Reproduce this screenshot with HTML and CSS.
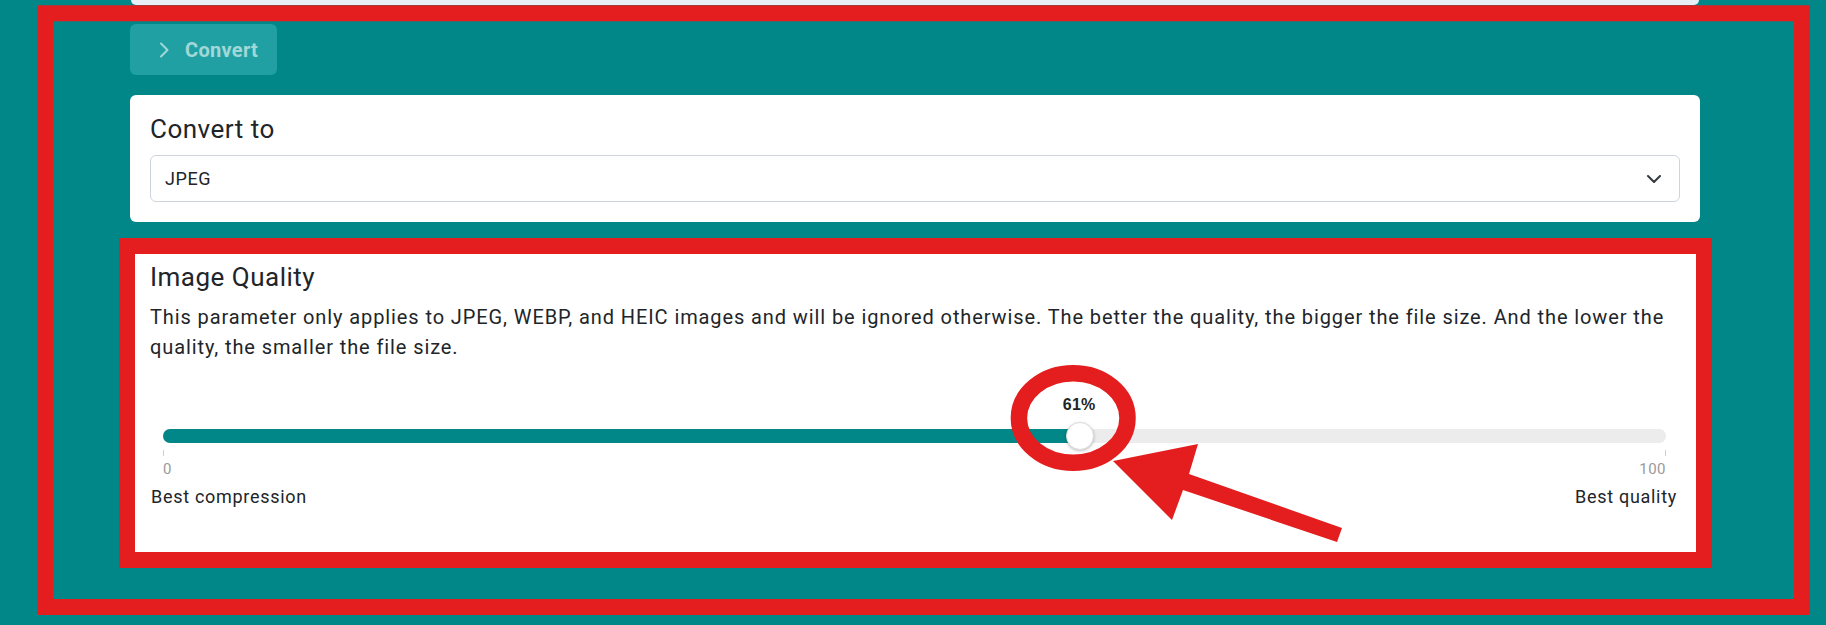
FILE: index.html
```html
<!DOCTYPE html>
<html lang="en">
<head>
<meta charset="utf-8">
<title>Convert</title>
<link rel="stylesheet" href="styles.css">
</head>
<body>
<div class="page">
  <div class="wrap">
    <div class="top-card"></div>
    <button class="convert-btn" type="button">
      <svg class="btn-chevron" width="11" height="16" viewBox="0 0 11 16"><path d="M2 1.5 L8.5 8 L2 14.5" fill="none" stroke="currentColor" stroke-width="2" stroke-linecap="round" stroke-linejoin="round"/></svg>
      <span>Convert</span>
    </button>

    <section class="card card-format">
      <h2 class="card-title">Convert to</h2>
      <div class="select">
        <span class="select-value">JPEG</span>
        <svg class="select-chevron" width="14" height="8" viewBox="0 0 14 8"><path d="M1 1 L7 7 L13 1" fill="none" stroke="#343a40" stroke-width="2" stroke-linecap="round" stroke-linejoin="round"/></svg>
      </div>
    </section>

    <section class="card card-quality">
      <h2 class="card-title">Image Quality</h2>
      <p class="card-text">This parameter only applies to JPEG, WEBP, and HEIC images and will be ignored otherwise. The better the quality, the bigger the file size. And the lower the quality, the smaller the file size.</p>
      <div class="slider">
        <div class="track">
          <div class="fill" style="width:61%"></div>
          <div class="thumb" style="left:61%"><span class="bubble">61%</span></div>
        </div>
        <div class="ticks">
          <div class="tick-col"><i class="tick"></i><span class="tick-label">0</span></div>
          <div class="tick-col tick-col-end"><i class="tick"></i><span class="tick-label">100</span></div>
        </div>
      </div>
      <div class="legend">
        <span>Best compression</span>
        <span>Best quality</span>
      </div>
    </section>
  </div>

  <svg class="annot" width="1826" height="625" viewBox="0 0 1826 625">
    <rect x="45.5" y="13.3" width="1756.5" height="593.7" fill="none" stroke="#e41e1f" stroke-width="16"/>
    <rect x="127" y="246" width="1577" height="314" fill="none" stroke="#e41e1f" stroke-width="16"/>
    <ellipse cx="1073.2" cy="418" rx="54.3" ry="44.8" fill="none" stroke="#e41e1f" stroke-width="16.5"/>
    <polygon points="1113,461 1198,444 1189,474 1342,528 1337,542 1183,490 1172,520" fill="#e41e1f"/>
  </svg>
</div>
</body>
</html>
```

FILE: styles.css
```css
* { box-sizing: border-box; }

html, body {
  margin: 0;
  padding: 0;
}

body {
  background: #028789;
  font-family: Roboto, "Liberation Sans", sans-serif;
  color: #212529;
  width: 1826px;
  height: 625px;
  overflow: hidden;
}

.page {
  position: relative;
  width: 1826px;
  height: 625px;
}

.wrap {
  margin-left: 130px;
  width: 1570px;
}

.top-card {
  height: 5px;
  margin: 0 1px;
  background: #e8eff7;
  border-radius: 0 0 6px 6px;
}

.convert-btn {
  margin-top: 19px;
  height: 51px;
  width: 147px;
  padding: 0 0 0 29px;
  border: none;
  border-radius: 6px;
  background: #21a0a3;
  color: #a2d7d7;
  display: flex;
  align-items: center;
  gap: 15px;
  font-family: Roboto, "Liberation Sans", sans-serif;
  font-weight: 700;
  font-size: 20px;
  letter-spacing: 0.3px;
}

.btn-chevron { display: block; flex: none; }

.card {
  background: #fff;
  border-radius: 6px;
  padding: 19px 20px 20px;
}

.card-format { margin-top: 20px; }

.card-quality {
  margin-top: 21px;
  padding-bottom: 50px;
}

.card-title {
  margin: 0 0 10px;
  font-size: 26px;
  line-height: 31px;
  font-weight: 400;
  letter-spacing: 0.5px;
}

.card-quality .card-title { margin-bottom: 9px; }

.select {
  height: 47px;
  border: 1px solid #ced4da;
  border-radius: 6px;
  padding: 0 18px 0 14px;
  display: flex;
  align-items: center;
  justify-content: space-between;
}

.select-value {
  font-size: 18px;
  letter-spacing: 0.6px;
}

.select-chevron { display: block; }

.card-text {
  margin: 0;
  font-size: 20px;
  line-height: 30px;
  letter-spacing: 0.9px;
}

.slider {
  margin: 67px 14px 0 13px;
}

.track {
  position: relative;
  height: 14px;
  border-radius: 7px;
  background: #ececec;
}

.fill {
  height: 100%;
  border-radius: 7px 0 0 7px;
  background: #028789;
}

.thumb {
  position: absolute;
  top: 50%;
  width: 28px;
  height: 28px;
  border-radius: 50%;
  background: #fff;
  border: 1px solid #dcdcdc;
  box-shadow: 0 1px 3px rgba(0, 0, 0, 0.25);
  transform: translate(-50%, -50%);
}

.bubble {
  position: absolute;
  left: 50%;
  bottom: 100%;
  margin-bottom: 9px;
  transform: translateX(-52%);
  font-family: "Liberation Sans", Arial, sans-serif;
  font-weight: 700;
  font-size: 16px;
  line-height: 19px;
  letter-spacing: 0.3px;
  white-space: nowrap;
  color: #212529;
}

.ticks {
  display: flex;
  justify-content: space-between;
}

.tick-col {
  display: flex;
  flex-direction: column;
  align-items: flex-start;
}

.tick-col-end { align-items: flex-end; }

.tick {
  display: block;
  width: 1px;
  height: 6px;
  margin-top: 7px;
  background: #cfcfcf;
}

.tick-label {
  margin-top: 4px;
  font-size: 15px;
  line-height: 19px;
  letter-spacing: 0.5px;
  color: #9a9a9a;
}

.legend {
  margin-top: 4px;
  padding: 0 3px 0 1px;
  display: flex;
  justify-content: space-between;
  font-size: 18px;
  line-height: 27px;
  letter-spacing: 0.7px;
}

.annot {
  position: absolute;
  left: 0;
  top: 0;
  pointer-events: none;
}
```
